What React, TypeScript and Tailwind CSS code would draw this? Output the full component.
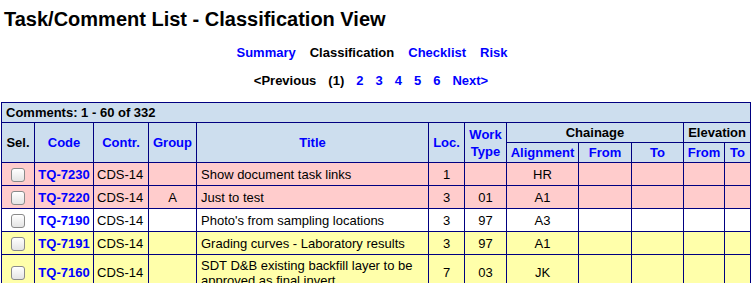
import React from "react";

type Row = {
  code: string;
  contr: string;
  group: string;
  title: React.ReactNode;
  loc: string;
  wt: string;
  align: string;
  bg: string;
  h: string;
};

const rows: Row[] = [
  { code: "TQ-7230", contr: "CDS-14", group: "", title: "Show document task links", loc: "1", wt: "", align: "HR", bg: "bg-[#ffcccc]", h: "h-[23px]" },
  { code: "TQ-7220", contr: "CDS-14", group: "A", title: "Just to test", loc: "3", wt: "01", align: "A1", bg: "bg-[#ffcccc]", h: "h-[23px]" },
  { code: "TQ-7190", contr: "CDS-14", group: "", title: "Photo's from sampling locations", loc: "3", wt: "97", align: "A3", bg: "bg-white", h: "h-[23px]" },
  { code: "TQ-7191", contr: "CDS-14", group: "", title: "Grading curves - Laboratory results", loc: "3", wt: "97", align: "A1", bg: "bg-[#ffffaa]", h: "h-[23px]" },
  { code: "TQ-7160", contr: "CDS-14", group: "", title: "SDT D&B existing backfill layer to be approved as final invert", loc: "7", wt: "03", align: "JK", bg: "bg-[#ffffaa]", h: "h-[36px]" },
];

const B = "border border-[#000080]";

function Check() {
  return (
    <span className="inline-block w-[14px] h-[14px] rounded-[3px] border border-[#8a8a8a] bg-gradient-to-b from-white to-[#e4e4e4] align-middle shadow-[inset_0_1px_0_#fff]" />
  );
}

export default function App() {
  return (
    <div className="w-[752px] h-[283px] overflow-hidden bg-white text-black" style={{ fontFamily: '"Liberation Sans", Arial, sans-serif' }}>
      <h1 className="pl-[4px] pt-[7px] text-[20px] leading-[24px] font-bold">Task/Comment List - Classification View</h1>
      <div className="w-[742px] flex flex-col items-center text-[13px] font-bold mt-[14px]">
        <div className="flex gap-[14px] leading-[16px] pl-[2px]">
          <span className="text-[#0000ff]">Summary</span>
          <span>Classification</span>
          <span className="text-[#0000ff]">Checklist</span>
          <span className="text-[#0000ff]">Risk</span>
        </div>
        <div className="flex gap-[12px] leading-[16px] mt-[12px]">
          <span>&lt;Previous</span>
          <span>(1)</span>
          <span className="text-[#0000ff]">2</span>
          <span className="text-[#0000ff]">3</span>
          <span className="text-[#0000ff]">4</span>
          <span className="text-[#0000ff]">5</span>
          <span className="text-[#0000ff]">6</span>
          <span className="text-[#0000ff]">Next&gt;</span>
        </div>
      </div>
      <table className="ml-[1px] mt-[13px] border-collapse table-fixed w-[749px] text-[13px] leading-[15px]">
        <colgroup>
          <col className="w-[33px]" />
          <col className="w-[59px]" />
          <col className="w-[55px]" />
          <col className="w-[48px]" />
          <col className="w-[232px]" />
          <col className="w-[36px]" />
          <col className="w-[42px]" />
          <col className="w-[72px]" />
          <col className="w-[53px]" />
          <col className="w-[52px]" />
          <col className="w-[41px]" />
          <col className="w-[26px]" />
        </colgroup>
        <thead className="bg-[#cddeee] font-bold">
          <tr className="h-[20px]">
            <td colSpan={12} className={`${B} px-[4px] text-left`}>Comments: 1 - 60 of 332</td>
          </tr>
          <tr className="h-[20px]">
            <td rowSpan={2} className={`${B} text-center`}>Sel.</td>
            <td rowSpan={2} className={`${B} text-center text-[#0000ff]`}>Code</td>
            <td rowSpan={2} className={`${B} text-center text-[#0000ff]`}>Contr.</td>
            <td rowSpan={2} className={`${B} text-center text-[#0000ff]`}>Group</td>
            <td rowSpan={2} className={`${B} text-center text-[#0000ff]`}>Title</td>
            <td rowSpan={2} className={`${B} text-center text-[#0000ff]`}>Loc.</td>
            <td rowSpan={2} className={`${B} text-center text-[#0000ff] leading-[17px]`}>Work<br />Type</td>
            <td colSpan={3} className={`${B} text-center`}>Chainage</td>
            <td colSpan={2} className={`${B} text-center`}>Elevation</td>
          </tr>
          <tr className="h-[20px]">
            <td className={`${B} text-center text-[#0000ff]`}>Alignment</td>
            <td className={`${B} text-center text-[#0000ff]`}>From</td>
            <td className={`${B} text-center text-[#0000ff]`}>To</td>
            <td className={`${B} text-center text-[#0000ff]`}>From</td>
            <td className={`${B} text-center text-[#0000ff]`}>To</td>
          </tr>
        </thead>
        <tbody>
          {rows.map((r) => (
            <tr key={r.code} className={`${r.bg} ${r.h}`}>
              <td className={`${B} text-center`}><Check /></td>
              <td className={`${B} text-center font-bold text-[#0000ff]`}>{r.code}</td>
              <td className={`${B} px-[3px]`}>{r.contr}</td>
              <td className={`${B} text-center`}>{r.group}</td>
              <td className={`${B} px-[4px]`}>{r.title}</td>
              <td className={`${B} text-center`}>{r.loc}</td>
              <td className={`${B} text-center`}>{r.wt}</td>
              <td className={`${B} text-center`}>{r.align}</td>
              <td className={B}></td>
              <td className={B}></td>
              <td className={B}></td>
              <td className={B}></td>
            </tr>
          ))}
        </tbody>
      </table>
    </div>
  );
}
